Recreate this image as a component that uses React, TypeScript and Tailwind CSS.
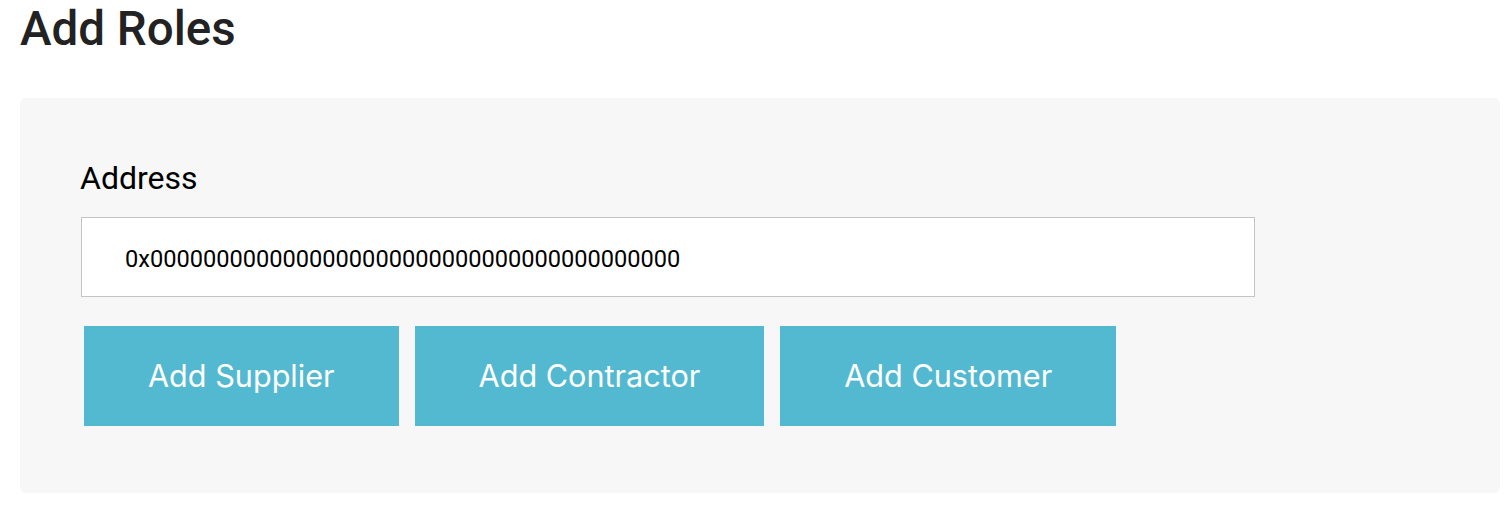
import React from 'react';

const roles = ['Add Supplier', 'Add Contractor', 'Add Customer'];

const App = () => {
  return (
    <div className="min-h-[512px] bg-white px-5 font-['Roboto',sans-serif]">
      <h1 className="pt-[2px] text-[47.5px] font-medium leading-[54px] text-[#222222]">Add Roles</h1>

      <div className="mt-[42px] h-[395px] w-[1480px] rounded-md bg-[#f7f7f7] pl-[60px] pt-[60px]">
        <label className="block text-[32px] leading-[40px] text-black">Address</label>

        <div className="ml-px mt-[19px] flex h-[80px] w-[1174px] items-center border border-[#c4c4c4] bg-white pl-[43px]">
          <span className="pt-[6px] text-[23.6px] text-black">0x0000000000000000000000000000000000000000</span>
        </div>

        <div className="ml-[4px] mt-[29px] flex gap-4">
          {roles.map((role) => (
            <button
              key={role}
              className="flex h-[100px] items-center bg-[#53b9d1] px-16 font-['Inter',sans-serif] text-[30.6px] text-white"
            >
              {role}
            </button>
          ))}
        </div>
      </div>
    </div>
  );
};

export default App;
